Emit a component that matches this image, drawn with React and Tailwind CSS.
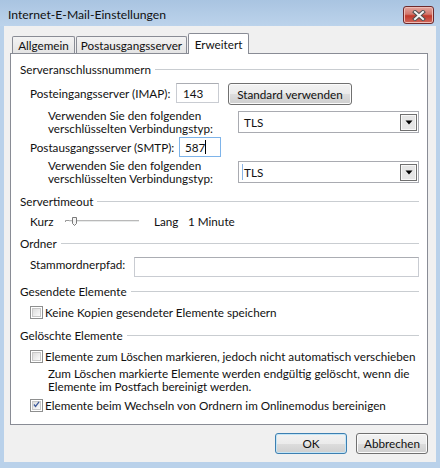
import React from "react";

function Heading({ children, className }) {
  return (
    <div className={"flex items-center h-[16px] " + (className || "")}>
      <span className="whitespace-nowrap">{children}</span>
      <div className="flex-1 h-px bg-[#c9cdd1] ml-[4px]" />
    </div>
  );
}

function Checkbox({ checked }) {
  return (
    <div className="w-[13px] h-[13px] border border-[#8e8f8f] bg-white p-[1px] shrink-0">
      <div className="w-full h-full border border-[#c8c8c8] bg-[linear-gradient(135deg,#dcdcdc,#fbfbfb)] flex items-center justify-center">
        {checked && (
          <svg width="11" height="11" viewBox="0 0 11 11" className="-mt-[1px]">
            <path d="M1.5 5.5 L4 8.5 L9.5 1.5" fill="none" stroke="#3d5a9a" strokeWidth="2" />
          </svg>
        )}
      </div>
    </div>
  );
}

function Select({ focusCaret }) {
  return (
    <div className="w-[181px] h-[22px] border border-[#a9abb1] bg-white flex items-center justify-between pl-[3px] pr-[1px] shrink-0">
      <div className="flex items-center">
        {focusCaret ? <div className="w-px h-[16px] bg-[#8ab4e6] mr-[1px]" /> : <div className="w-px h-[16px] mr-[1px]" />}
        <span>TLS</span>
      </div>
      <div className="w-[17px] h-[17px] border border-[#707070] bg-[#e6e6e6] shadow-[inset_0_0_0_1px_#f8f8f8] flex items-center justify-center">
        <svg width="8" height="5" viewBox="0 0 8 5">
          <path d="M0.5 0.5 H7.5 L4 4.5 Z" fill="#000" />
        </svg>
      </div>
    </div>
  );
}

function WinButton({ children, className, focused }) {
  return (
    <div
      className={
        "h-[21px] flex items-center justify-center rounded-[3px] border whitespace-nowrap bg-[linear-gradient(#f2f2f2,#ebebeb_50%,#dddddd_50%,#cfcfcf)] " +
        (focused ? "border-[#3c7fb1] shadow-[inset_0_0_0_1px_#c4e5f6] " : "border-[#707070] shadow-[inset_0_0_0_1px_#fbfbfb] ") +
        (className || "")
      }
    >
      {children}
    </div>
  );
}

export default function App() {
  return (
    <div className="w-[440px] h-[468px] bg-[#b9d1ea] font-['Lato',sans-serif] text-[11.7px] leading-[13px] text-[#111] overflow-hidden">
      {/* title bar */}
      <div className="h-[26px] flex items-start justify-between bg-[linear-gradient(#a9c4e1,#bcd3eb)]">
        <span className="ml-[8px] mt-[7px] text-[12.2px] leading-[16px] whitespace-nowrap">Internet-E-Mail-Einstellungen</span>
        <div className="mt-[6px] mr-[6px] w-[31px] h-[18px] rounded-[3px] border border-[#6d2a2c] bg-[linear-gradient(#e3a59e,#d2776c_45%,#c1392b_55%,#d0685c)] shadow-[inset_0_0_0_1px_#eebcb5] flex items-center justify-center">
          <svg width="14" height="11" viewBox="0 0 14 11">
            <path d="M3 2 L11 9 M11 2 L3 9" stroke="#4f4f4f" strokeWidth="4" strokeLinecap="square" />
            <path d="M3 2 L11 9 M11 2 L3 9" stroke="#f4f4f4" strokeWidth="2" strokeLinecap="square" />
          </svg>
        </div>
      </div>

      {/* client area */}
      <div className="ml-[4px] w-[432px] h-[436px] bg-[#f0f0f0] pt-[7px]">
        {/* tabs */}
        <div className="ml-[6px] pl-[2px] h-[20px] flex items-end">
          <div className="w-[63px] h-[17px] border border-b-0 border-[#898c95] rounded-t-[2px] bg-[linear-gradient(#f3f3f3,#e4e4e4)] flex items-center justify-center pt-[1px] whitespace-nowrap">
            Allgemein
          </div>
          <div className="ml-[1px] w-[111px] h-[17px] border border-b-0 border-[#898c95] rounded-t-[2px] bg-[linear-gradient(#f3f3f3,#e4e4e4)] flex items-center justify-center pt-[1px] whitespace-nowrap">
            Postausgangsserver
          </div>
          <div className="relative z-10 -mb-[1px] ml-[1px] w-[61px] h-[21px] border border-b-0 border-[#898c95] rounded-t-[2px] bg-white flex items-center justify-center whitespace-nowrap">
            Erweitert
          </div>
        </div>

        {/* panel */}
        <div className="ml-[6px] w-[418px] h-[372px] border border-[#898c95] bg-white pl-[9px] pr-[8px] pt-[7px]">
          <Heading>Serveranschlussnummern</Heading>

          <div className="mt-[6px] pl-[10px] flex items-start">
            <div className="w-[146px] h-[20px] flex items-center whitespace-nowrap">Posteingangsserver (IMAP):</div>
            <div className="w-[43px] h-[20px] border border-[#c9ccd2] border-t-[#abadb3] bg-white flex items-center pl-[6px]">143</div>
            <WinButton className="ml-[9px] w-[124px] h-[22px]">Standard verwenden</WinButton>
          </div>

          <div className="mt-[4px] pl-[28px] h-[26px] flex items-center">
            <div className="w-[190px] whitespace-nowrap">
              <div>Verwenden Sie den folgenden</div>
              <div>verschlüsselten Verbindungstyp:</div>
            </div>
            <Select />
          </div>

          <div className="mt-[2px] pl-[10px] flex items-center h-[20px]">
            <div className="w-[149px] whitespace-nowrap">Postausgangsserver (SMTP):</div>
            <div className="w-[42px] h-[20px] border border-[#7eb4ea] bg-white flex items-center pl-[5px]">
              <span>587</span>
              <div className="w-px h-[14px] bg-black" />
            </div>
          </div>

          <div className="mt-[2px] pl-[28px] h-[26px] flex items-center">
            <div className="w-[190px] whitespace-nowrap">
              <div>Verwenden Sie den folgenden</div>
              <div>verschlüsselten Verbindungstyp:</div>
            </div>
            <Select focusCaret />
          </div>

          <Heading className="mt-[8px]">Servertimeout</Heading>

          <div className="mt-[4px] pl-[10px] h-[16px] flex items-center">
            <div className="w-[35px]">Kurz</div>
            <svg width="74" height="14" viewBox="0 0 74 14" className="shrink-0">
              <path d="M0.5 6.5 H4" stroke="#9a9a9a" />
              <path d="M0.5 6.5 V8" stroke="#9a9a9a" />
              <rect x="4" y="6" width="70" height="2" fill="#e8eaea" />
              <path d="M4 6.5 H74" stroke="#b9b9b9" />
              <path d="M7.5 3.5 H11.5 V9.5 L9.5 11.5 L7.5 9.5 Z" fill="#f4f4f4" stroke="#7a7a7a" />
            </svg>
            <div className="ml-[15px] w-[34px]">Lang</div>
            <div className="whitespace-nowrap">1 Minute</div>
          </div>

          <Heading className="mt-[6px]">Ordner</Heading>

          <div className="mt-[6px] pl-[10px] h-[20px] flex items-center">
            <div className="w-[104px] mb-[5px] whitespace-nowrap shrink-0">Stammordnerpfad:</div>
            <div className="flex-1 h-[20px] border border-[#c9ccd2] border-t-[#abadb3] bg-white" />
          </div>

          <Heading className="mt-[6px]">Gesendete Elemente</Heading>

          <div className="mt-[5px] pl-[10px] h-[16px] flex items-center">
            <Checkbox />
            <span className="ml-[2px] whitespace-nowrap">Keine Kopien gesendeter Elemente speichern</span>
          </div>

          <Heading className="mt-[7px]">Gelöschte Elemente</Heading>

          <div className="mt-[5px] pl-[10px] h-[16px] flex items-center">
            <Checkbox />
            <span className="ml-[2px] whitespace-nowrap">Elemente zum Löschen markieren, jedoch nicht automatisch verschieben</span>
          </div>

          <div className="mt-[3px] pl-[28px]">
            <div className="whitespace-nowrap">Zum Löschen markierte Elemente werden endgültig gelöscht, wenn die</div>
            <div>Elemente im Postfach bereinigt werden.</div>
          </div>

          <div className="mt-[4px] pl-[10px] h-[16px] flex items-center">
            <Checkbox checked />
            <span className="ml-[2px] whitespace-nowrap">Elemente beim Wechseln von Ordnern im Onlinemodus bereinigen</span>
          </div>
        </div>

        {/* bottom buttons */}
        <div className="mt-[8px] mr-[8px] flex justify-end gap-[9px]">
          <WinButton focused className="w-[72px]">OK</WinButton>
          <WinButton className="w-[72px]">Abbrechen</WinButton>
        </div>
      </div>
    </div>
  );
}
